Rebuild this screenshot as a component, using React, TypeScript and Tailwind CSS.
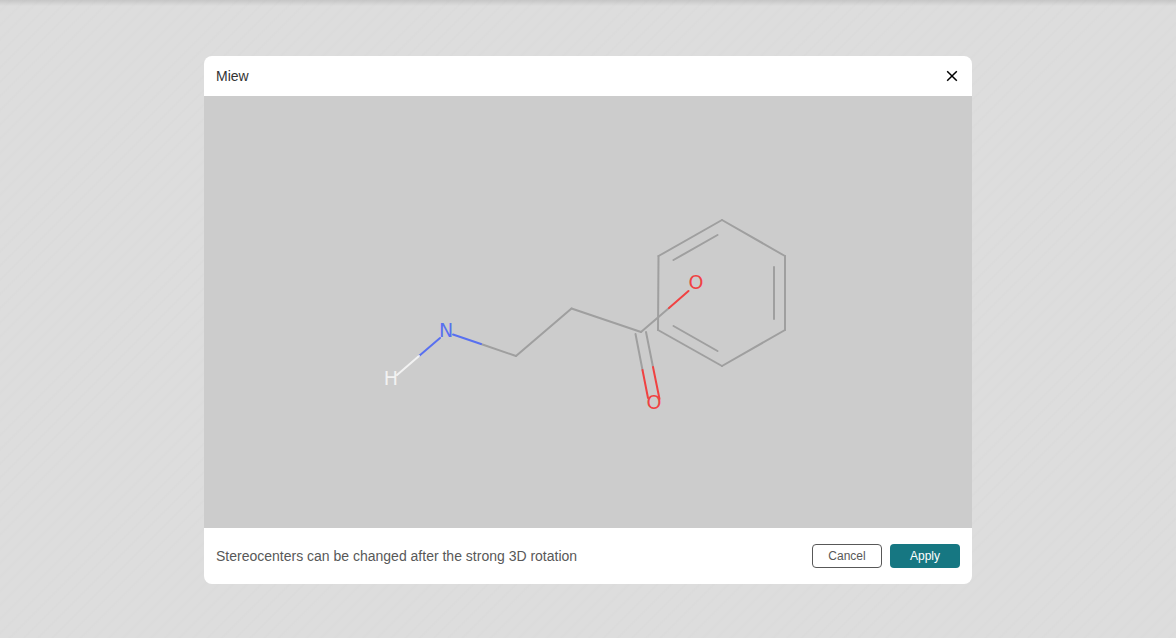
const GREY = "#9f9f9f";
const RED = "#f04242";
const BLUE = "#5870f0";
const WHITE = "#f2f2f2";

type Bond = [number, number, number, number, string];

const bonds: Bond[] = [
  [722, 220, 785, 256, GREY],
  [785, 256, 785, 330, GREY],
  [785, 330, 722, 366, GREY],
  [722, 366, 658, 330, GREY],
  [658, 330, 658.5, 256, GREY],
  [658.5, 256, 722, 220, GREY],
  [673.5, 260, 717.5, 235, GREY],
  [774, 267, 774, 319, GREY],
  [673.5, 326, 717.5, 351, GREY],
  [481, 344, 516, 356, GREY],
  [516, 356, 571.5, 308.5, GREY],
  [571.5, 308.5, 641, 332, GREY],
  [641, 332, 669, 308, GREY],
  [635.5, 334, 642.5, 370, GREY],
  [646, 332, 653, 367, GREY],
  [669, 308, 688.5, 291, RED],
  [642.5, 370, 648, 398, RED],
  [653, 367, 659.5, 399, RED],
  [453, 334.5, 481, 344, BLUE],
  [440, 338, 419, 356, BLUE],
  [419, 356, 397, 375, WHITE],
];

const atoms: { x: number; y: number; label: string; color: string }[] = [
  { x: 391, y: 385, label: "H", color: WHITE },
  { x: 446, y: 337, label: "N", color: BLUE },
  { x: 696, y: 289, label: "O", color: RED },
  { x: 654, y: 409, label: "O", color: RED },
];

function Molecule() {
  return (
    <svg
      viewBox="204 96 768 432"
      className="block w-full"
      role="img"
      aria-label="Molecule"
    >
      <g strokeWidth="2" strokeLinecap="round">
        {bonds.map(([x1, y1, x2, y2, color], i) => (
          <line key={i} x1={x1} y1={y1} x2={x2} y2={y2} stroke={color} />
        ))}
      </g>
      <g fontSize="19" textAnchor="middle" className="font-['DejaVu_Sans',sans-serif]">
        {atoms.map(({ x, y, label, color }, i) => (
          <text key={i} x={x} y={y} fill={color}>
            {label}
          </text>
        ))}
      </g>
    </svg>
  );
}

export default function App() {
  return (
    <div className="flex min-h-screen items-center justify-center bg-[linear-gradient(rgba(0,0,0,0.1),rgba(0,0,0,0)_6px),repeating-linear-gradient(135deg,#dddddd_0px,#dddddd_6px,#dbdbdb_8px,#dddddd_10px)] pt-0.5 font-['Liberation_Sans',sans-serif]">
      <div
        role="dialog"
        aria-labelledby="dialog-title"
        className="w-full max-w-3xl overflow-hidden rounded-lg bg-white"
      >
        <header className="flex h-10 items-center justify-between px-3">
          <h1 id="dialog-title" className="text-sm text-[#333333]">
            Miew
          </h1>
          <button type="button" aria-label="Close" className="flex size-4 items-center justify-center text-black">
            <svg viewBox="0 0 16 16" className="size-4" fill="none" stroke="currentColor" strokeWidth="1.5">
              <path d="M3.2 3.2 12.8 12.8M12.8 3.2 3.2 12.8" />
            </svg>
          </button>
        </header>
        <main className="bg-[#cccccc]">
          <Molecule />
        </main>
        <footer className="flex h-14 items-center justify-between px-3">
          <p className="text-sm text-[#585858]">Stereocenters can be changed after the strong 3D rotation</p>
          <div className="flex gap-2 text-xs">
            <button type="button" className="h-6 w-[70px] rounded border border-[#585858] bg-white text-[#585858]">
              Cancel
            </button>
            <button type="button" className="h-6 w-[70px] rounded bg-[#167782] text-white">
              Apply
            </button>
          </div>
        </footer>
      </div>
    </div>
  );
}
